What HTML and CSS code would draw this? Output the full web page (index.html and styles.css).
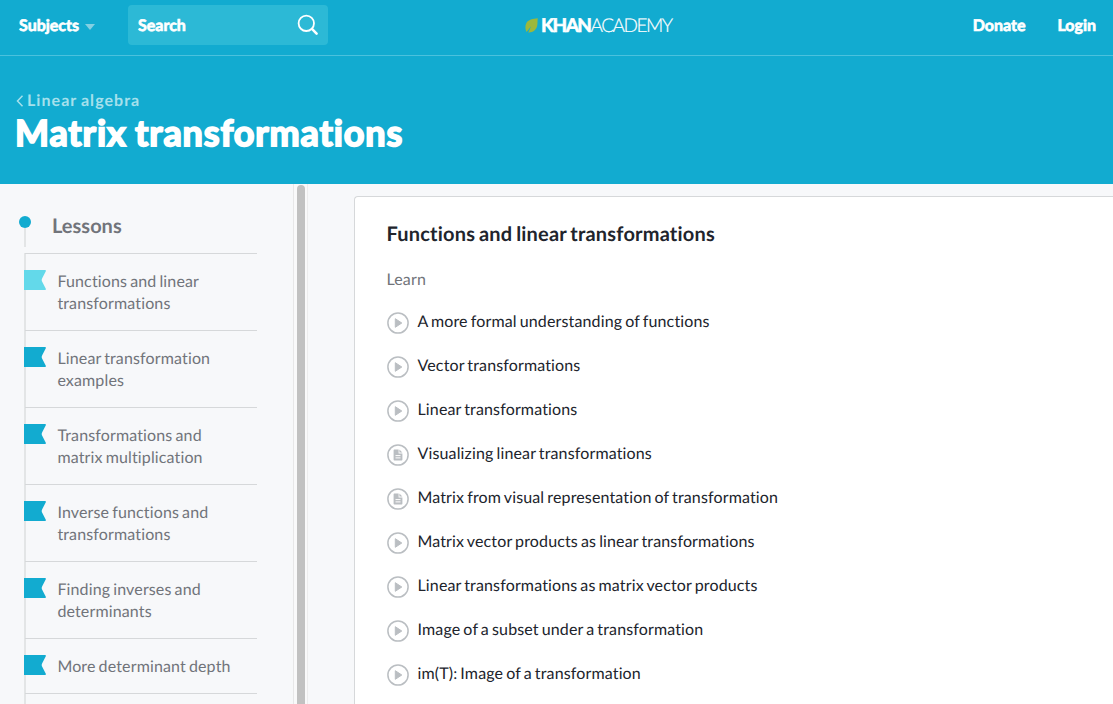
FILE: index.html
```
<!DOCTYPE html>
<html lang="en">
<head>
    <meta charset="UTF-8">
    <meta name="viewport" content="width=device-width, initial-scale=1.0">
    <title>Matrix transformations | Khan Academy</title>
    <link rel="stylesheet" href="styles.css">
</head>
<body>
    <!-- Shared icons -->
    <svg class="icon-defs" width="0" height="0">
        <symbol id="icon-flag" viewBox="0 0 22 20">
            <path d="M0 0H21Q22.3 0 21.8 1.2L18.2 8.2Q17.2 10 18.2 11.8L21.8 18.8Q22.3 20 21 20H0Z" fill="currentColor"/>
        </symbol>
        <symbol id="icon-video" viewBox="0 0 22 22">
            <circle cx="11" cy="11" r="10.1" fill="none" stroke="currentColor" stroke-width="1.5"/>
            <path d="M8.3 6.7V15.3L14.8 11Z" fill="currentColor" stroke="currentColor" stroke-width="1" stroke-linejoin="round"/>
        </symbol>
        <symbol id="icon-article" viewBox="0 0 22 22">
            <circle cx="11" cy="11" r="10.1" fill="none" stroke="currentColor" stroke-width="1.5"/>
            <path d="M7.3 5.6H11.6V9.4H15.4V15.7Q15.4 16.4 14.7 16.4H7.3Q6.6 16.4 6.6 15.7V6.3Q6.6 5.6 7.3 5.6ZM12.4 5.6L15.4 8.6H12.4Z" fill="currentColor"/>
            <path d="M8.5 11.6H13.5M8.5 13.9H13.5" stroke="#fff" stroke-width="1"/>
        </symbol>
    </svg>

    <header class="site-header">
        <nav class="navbar">
            <div class="nav-left">
                <a href="#" class="nav-link subjects">Subjects <span class="caret"></span></a>
                <div class="search-box">
                    <span class="search-label">Search</span>
                    <svg class="search-icon" width="22" height="22" viewBox="0 0 22 22" fill="none" stroke="#fff">
                        <circle cx="9.3" cy="9.3" r="7.7" stroke-width="1.8"/>
                        <path d="M15.2 15.2L19.6 19.6" stroke-width="2.6" stroke-linecap="round"/>
                    </svg>
                </div>
            </div>
            <a href="#" class="logo">
                <svg class="leaf" width="13" height="15" viewBox="0 0 13 15">
                    <path d="M12.8 0.3C8 0.6 3 1.8 1.2 5.4C-0.2 8.4 0.4 11.8 1.6 14L6.2 8.2L3.2 14.4C7.6 14.8 11 12.2 12.1 8.2C12.8 5.4 12.3 2.8 12.8 0.3Z" fill="#9cb83c"/>
                </svg>
                <span class="logo-khan">KHAN</span><span class="logo-academy">ACADEMY</span>
            </a>
            <div class="nav-right">
                <a href="#" class="nav-link">Donate</a>
                <a href="#" class="nav-link">Login</a>
            </div>
        </nav>
        <div class="page-title">
            <a href="#" class="breadcrumb">
                <svg width="8" height="12" viewBox="0 0 8 12" fill="none" stroke="currentColor" stroke-width="1.5">
                    <path d="M6.5 0.8L1.5 6L6.5 11.2"/>
                </svg>
                <span>Linear algebra</span>
            </a>
            <h1>Matrix transformations</h1>
        </div>
    </header>

    <main class="content">
        <aside class="sidebar">
            <div class="lessons-header">
                <div class="marker"><span class="dot"></span><span class="stem"></span></div>
                <h2>Lessons</h2>
            </div>
            <ul class="lesson-list">
                <li class="lesson active"><svg class="flag"><use href="#icon-flag"/></svg><a href="#">Functions and linear transformations</a></li>
                <li class="lesson"><svg class="flag"><use href="#icon-flag"/></svg><a href="#">Linear transformation examples</a></li>
                <li class="lesson"><svg class="flag"><use href="#icon-flag"/></svg><a href="#">Transformations and matrix multiplication</a></li>
                <li class="lesson"><svg class="flag"><use href="#icon-flag"/></svg><a href="#">Inverse functions and transformations</a></li>
                <li class="lesson"><svg class="flag"><use href="#icon-flag"/></svg><a href="#">Finding inverses and determinants</a></li>
                <li class="lesson"><svg class="flag"><use href="#icon-flag"/></svg><a href="#">More determinant depth</a></li>
                <li class="lesson"></li>
            </ul>
        </aside>
        <div class="scroll-track"><div class="scroll-thumb"></div></div>

        <section class="card">
            <h2>Functions and linear transformations</h2>
            <h3>Learn</h3>
            <ul class="task-list">
                <li><svg class="task-icon"><use href="#icon-video"/></svg><a href="#">A more formal understanding of functions</a></li>
                <li><svg class="task-icon"><use href="#icon-video"/></svg><a href="#">Vector transformations</a></li>
                <li><svg class="task-icon"><use href="#icon-video"/></svg><a href="#">Linear transformations</a></li>
                <li><svg class="task-icon"><use href="#icon-article"/></svg><a href="#">Visualizing linear transformations</a></li>
                <li><svg class="task-icon"><use href="#icon-article"/></svg><a href="#">Matrix from visual representation of transformation</a></li>
                <li><svg class="task-icon"><use href="#icon-video"/></svg><a href="#">Matrix vector products as linear transformations</a></li>
                <li><svg class="task-icon"><use href="#icon-video"/></svg><a href="#">Linear transformations as matrix vector products</a></li>
                <li><svg class="task-icon"><use href="#icon-video"/></svg><a href="#">Image of a subset under a transformation</a></li>
                <li><svg class="task-icon"><use href="#icon-video"/></svg><a href="#">im(T): Image of a transformation</a></li>
            </ul>
        </section>
    </main>
</body>
</html>
```

FILE: styles.css
```
* {
    margin: 0;
    padding: 0;
    box-sizing: border-box;
}

body {
    font-family: Lato, "Open Sans", sans-serif;
    font-size: 16px;
    line-height: 22px;
    font-variant-ligatures: none;
    text-rendering: geometricPrecision;
    letter-spacing: 0.14px;
    word-spacing: -1.2px;
    background-color: #f7f8fa;
    color: #21242c;
    height: 100vh;
    display: flex;
    flex-direction: column;
    overflow: hidden;
}

a {
    color: inherit;
    text-decoration: none;
}

ul {
    list-style: none;
}

.icon-defs {
    position: absolute;
}

/* Header */
.site-header {
    flex: none;
    height: 184px;
    background-color: #12abd0;
    color: #fff;
}

.navbar {
    height: 56px;
    display: grid;
    grid-template-columns: 506px auto 1fr;
    align-items: start;
    padding: 5px 17px 0 19px;
    border-bottom: 1px solid #4bc1dd;
}

.nav-left,
.nav-right {
    display: flex;
    align-items: center;
    height: 40px;
}

.nav-right {
    justify-content: flex-end;
    gap: 32px;
}

.nav-link,
.search-label {
    padding-top: 2px;
    font-weight: 700;
    letter-spacing: 0;
    -webkit-text-stroke: 0.7px #fff;
}

.subjects {
    width: 109px;
    display: flex;
    align-items: center;
    gap: 6px;
}

.caret {
    border: 5px solid transparent;
    border-top: 6px solid #83d0e2;
    border-bottom: 0;
    margin-top: 2px;
}

.search-box {
    width: 200px;
    height: 40px;
    display: flex;
    align-items: center;
    justify-content: space-between;
    padding: 0 9px 0 10px;
    border-radius: 4px;
    background-color: #2cb9d6;
}

.logo {
    height: 40px;
    display: flex;
    align-items: center;
    font-size: 19px;
}

.leaf {
    margin-right: 3px;
}

.logo-khan,
.logo-academy {
    padding-top: 1px;
}

.logo-khan {
    font-weight: 700;
    letter-spacing: -1.5px;
    -webkit-text-stroke: 0.6px #fff;
}

.logo-academy {
    font-weight: 300;
    letter-spacing: -1.5px;
    -webkit-text-stroke: 0.2px #fff;
}

.page-title {
    padding: 34px 16px 0;
}

.breadcrumb {
    display: flex;
    align-items: center;
    gap: 3px;
    color: #a6e0ec;
    font-weight: 700;
    letter-spacing: 1.05px;
    word-spacing: -1px;
}

.page-title h1 {
    font-size: 36px;
    font-weight: 700;
    line-height: 44px;
    letter-spacing: 0.88px;
    margin: -2px 0 0 -1px;
    -webkit-text-stroke: 1.8px #fff;
}

/* Body */
.content {
    flex: 1;
    min-height: 0;
    display: flex;
}

.sidebar {
    width: 293px;
    padding: 31px 36px 0 19px;
}

.lessons-header {
    display: flex;
    height: 38px;
}

.marker {
    width: 33px;
    padding-top: 1px;
}

.dot {
    display: block;
    width: 12px;
    height: 12px;
    border-radius: 50%;
    background-color: #12abd0;
}

.stem {
    display: block;
    width: 2px;
    height: 19px;
    margin-left: 5px;
    background-color: #e3e5e6;
}

.lessons-header h2 {
    font-size: 20px;
    line-height: 22px;
    letter-spacing: 0;
    color: #71747a;
}

.lesson-list {
    margin-left: 5px;
    border-left: 2px solid #e3e5e6;
}

.lesson {
    display: flex;
    gap: 11.4px;
    padding: 16px 0;
    margin-left: -1px;
    border-top: 1px solid #d6d8da;
    color: #71747a;
}

.lesson a {
    max-width: 180px;
    padding-top: 1px;
    margin-bottom: -1px;
}

.flag {
    flex: none;
    width: 22px;
    height: 20px;
    margin-left: -1px;
    color: #12abd0;
}

.active .flag {
    color: #63d9ea;
}

.scroll-track {
    width: 15px;
    flex: none;
    padding: 1px 2px 0 3px;
    background-color: #f9f9fa;
    border-left: 1px solid #e7e7e8;
    border-right: 1px solid #ececed;
}

.scroll-thumb {
    width: 8px;
    height: 540px;
    border-radius: 4px;
    background-color: #c1c1c1;
}

.card {
    flex: 1;
    margin: 12px 0 0 46px;
    padding: 26px 31.5px 0;
    background-color: #fff;
    border: 1px solid #d6d8da;
    border-right: 0;
    border-bottom: 0;
    border-radius: 4px 0 0 0;
}

.card h2 {
    font-size: 20px;
    letter-spacing: 0.19px;
}

.card h3 {
    margin: 24px 0 9px;
    font-size: 16px;
    font-weight: 400;
    color: #71747a;
}

.task-list li {
    height: 44px;
    display: flex;
    align-items: center;
    gap: 9px;
}

.task-icon {
    width: 22px;
    height: 22px;
    margin-top: 1px;
    color: #babec2;
}
```
